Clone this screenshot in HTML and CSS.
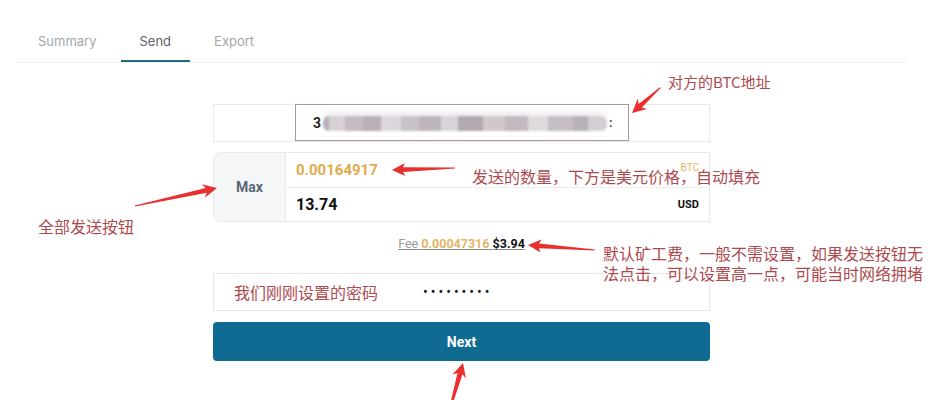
FILE: index.html
```html
<!DOCTYPE html>
<html lang="zh-CN">
<head>
<meta charset="utf-8">
<title>Send</title>
<link rel="stylesheet" href="styles.css">
</head>
<body>
<div class="page">
  <nav class="tabs">
    <div class="tab">Summary</div>
    <div class="tab active">Send</div>
    <div class="tab">Export</div>
  </nav>

  <form class="form">
    <div class="addr">
      <div class="addr-input">
        <span class="addr-first">3</span>
        <span class="blur"></span>
        <span class="addr-last">:</span>
      </div>
    </div>

    <div class="amount">
      <div class="max">Max</div>
      <div class="amount-fields">
        <div class="amount-row first">
          <span class="btc-val">0.00164917</span>
          <span class="btc-unit">BTC</span>
        </div>
        <div class="amount-row">
          <span class="usd-val">13.74</span>
          <span class="usd-unit">USD</span>
        </div>
      </div>
    </div>

    <div class="fee"><span class="fee-link"><span class="fee-label">Fee</span> <span class="fee-btc">0.00047316</span> <span class="fee-usd">$3.94</span></span></div>

    <div class="password"><span class="dots">•••••••••</span></div>

    <div class="next">Next</div>
  </form>

  <svg class="arrows" width="928" height="400" viewBox="0 0 928 400">
    <g fill="#e8302e">
      <polygon transform="translate(632,113) rotate(138.2)" points="-38,-0.6 -11,-2.4 -14,-7 0,0 -14,7 -11,2.4 -38,0.6"/>
      <polygon transform="translate(392,170) rotate(178.2)" points="-63,-0.6 -11,-2.4 -13,-6.5 0,0 -13,6.5 -11,2.4 -63,0.6"/>
      <polygon transform="translate(217,188) rotate(-12.4)" points="-84,-0.6 -11,-2.4 -14,-7 0,0 -14,7 -11,2.4 -84,0.6"/>
      <polygon transform="translate(528,245) rotate(184.3)" points="-67,-0.6 -11,-2.4 -13,-6.5 0,0 -13,6.5 -11,2.4 -67,0.6"/>
      <polygon transform="translate(463,363) rotate(-74.2)" points="-42,-1.2 -11,-2.6 -14,-7 0,0 -14,7 -11,2.6 -42,1.2"/>
    </g>
  </svg>

  <div class="note note-addr">对方的BTC地址</div>
  <div class="note note-amount">发送的数量，下方是美元价格，自动填充</div>
  <div class="note note-max">全部发送按钮</div>
  <div class="note note-fee">默认矿工费，一般不需设置，如果发送按钮无<br>法点击，可以设置高一点，可能当时网络拥堵</div>
  <div class="note note-pw">我们刚刚设置的密码</div>
</div>
</body>
</html>
```

FILE: styles.css
```css
* { box-sizing: border-box; }

html, body {
  margin: 0;
  padding: 0;
  background: #fff;
}

body {
  font-family: Roboto, "Noto Sans CJK SC", sans-serif;
  color: #222;
}

.page {
  position: relative;
  width: 928px;
  height: 400px;
  overflow: hidden;
}

/* Tabs */
.tabs {
  display: flex;
  gap: 5px;
  margin: 0 20px 0 16px;
  padding: 23px 0 0 3px;
  border-bottom: 1px solid #f0f0f0;
}

.tab {
  font-family: Inter, "Open Sans", sans-serif;
  font-size: 13px;
  color: #a4a8ac;
  padding: 0 19px;
  height: 39px;
  line-height: 37px;
  border-bottom: 2px solid transparent;
}

.tab.active {
  color: #5b646c;
  border-bottom-color: #1f6a7e;
}

/* Form */
.form {
  width: 497px;
  margin: 41px 0 0 213px;
}

.addr {
  display: flex;
  height: 38px;
  border: 1px solid #ebe8e8;
}

.addr-input {
  display: flex;
  align-items: center;
  width: 334px;
  height: 37px;
  margin: -1px 0 0 81px;
  padding-left: 17px;
  border: 1px solid #b39393;
  background: #fff;
}

.addr-first {
  font-size: 14px;
  font-weight: 700;
  color: #222;
}

.blur {
  display: inline-block;
  width: 284px;
  height: 15px;
  margin: 2px 0 0 2px;
  border-radius: 6px;
  filter: blur(1.3px);
  background: linear-gradient(90deg,
    #b9b0b8 0 6px, #d8d2d8 6px 22px, #c4bcc3 22px 40px, #b8afb7 40px 58px,
    #dcd7dc 58px 78px, #c8c1c7 78px 96px, #bdb5bc 96px 118px, #d9d4d9 118px 135px,
    #b2aab2 135px 160px, #cfc9ce 160px 182px, #c1b9c0 182px 205px, #dedade 205px 225px,
    #c6bec5 225px 250px, #b9b1b8 250px 265px, #d3ced3 265px 284px);
  box-shadow: 0 -6px 6px -2px #efebee;
}

.addr-last {
  font-size: 12px;
  font-weight: 700;
  color: #444;
  margin-left: 2px;
}

/* Amount */
.amount {
  display: flex;
  height: 70px;
  margin-top: 10px;
  border: 1px solid #e8e8e8;
  border-radius: 8px 0 0 8px;
}

.max {
  width: 72px;
  display: flex;
  align-items: center;
  justify-content: center;
  background: #f5f6f8;
  border-right: 1px solid #e6e6e6;
  border-radius: 8px 0 0 8px;
  font-size: 14px;
  font-weight: 700;
  color: #5a6877;
}

.amount-fields {
  flex: 1;
  display: flex;
  flex-direction: column;
}

.amount-row {
  flex: 1;
  display: flex;
  align-items: center;
  justify-content: space-between;
  padding: 0 10px;
}

.amount-row.first {
  border-bottom: 1px solid #eeeeee;
}

.btc-val {
  font-size: 15px;
  font-weight: 700;
  color: #e2ab4e;
}

.btc-unit {
  font-size: 10px;
  color: #e4b460;
  margin-top: -4px;
}

.usd-val {
  font-size: 16px;
  font-weight: 700;
  color: #111;
}

.usd-unit {
  font-size: 11px;
  font-weight: 700;
  color: #111;
}

/* Fee */
.fee {
  margin-top: 14px;
  height: 16px;
  line-height: 16px;
  text-align: center;
  font-size: 12.5px;
}

.fee-link {
  text-decoration: underline;
  text-decoration-color: #888;
}

.fee-label { color: #9a9a9a; }
.fee-btc { color: #e2b467; font-weight: 700; }
.fee-usd { color: #111; font-weight: 700; }

/* Password */
.password {
  height: 38px;
  margin-top: 21px;
  border: 1px solid #e8e8e8;
  display: flex;
  align-items: center;
  padding-left: 209px;
}

.dots {
  font-size: 14px;
  letter-spacing: 3px;
  color: #111;
}

/* Next */
.next {
  height: 39px;
  margin-top: 11px;
  background: #0f6b92;
  border-radius: 4px;
  color: #fff;
  font-size: 14px;
  font-weight: 700;
  display: flex;
  align-items: center;
  justify-content: center;
}

/* Annotations overlay */
.arrows {
  position: absolute;
  top: 0;
  left: 0;
  pointer-events: none;
}

.note {
  position: absolute;
  font-family: "Noto Sans CJK SC", sans-serif;
  font-size: 16px;
  line-height: 20px;
  color: #ad4a4e;
  white-space: nowrap;
}

.note-addr { left: 668px; top: 72px; font-size: 15px; }
.note-amount { left: 472px; top: 166px; }
.note-max { left: 38px; top: 216px; }
.note-fee { left: 603px; top: 243px; }
.note-pw { left: 234px; top: 282px; }
```
